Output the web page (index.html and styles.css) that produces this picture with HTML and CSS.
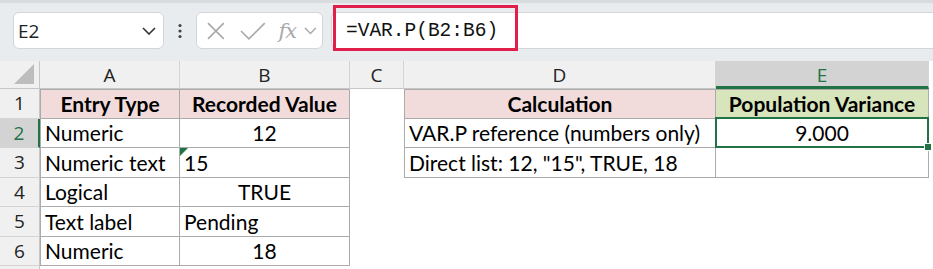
FILE: index.html
```html
<!DOCTYPE html>
<html lang="en">
<head>
    <meta charset="UTF-8">
    <title>VAR.P sheet</title>
    <link rel="stylesheet" href="styles.css">
</head>
<body>
    <div class="toolbar">
        <div class="namebox">
            <span class="name">E2</span>
            <svg class="chev" width="14" height="8" viewBox="0 0 14 8"><path d="M1 1 L7 7 L13 1" fill="none" stroke="#333" stroke-width="1.6"/></svg>
        </div>
        <div class="grip">
            <svg width="6" height="16" viewBox="0 0 6 16"><circle cx="3" cy="2.5" r="1.6" fill="#444"/><circle cx="3" cy="8" r="1.6" fill="#444"/><circle cx="3" cy="13.5" r="1.6" fill="#444"/></svg>
        </div>
        <div class="fxbox">
            <svg width="20" height="20" viewBox="0 0 20 20"><path d="M2 2 L18 18 M18 2 L2 18" stroke="#a9a9a9" stroke-width="1.6"/></svg>
            <svg width="26" height="20" viewBox="0 0 26 20"><path d="M1 10 L9 18 L25 2" fill="none" stroke="#a9a9a9" stroke-width="1.6"/></svg>
            <span class="fx">fx</span>
            <svg width="13" height="8" viewBox="0 0 13 8"><path d="M1 1 L6.5 6.5 L12 1" fill="none" stroke="#a9a9a9" stroke-width="1.5"/></svg>
        </div>
        <div class="formula">
            <span class="formula-text">=VAR.P(B2:B6)</span>
            <div class="highlight"></div>
        </div>
    </div>

    <div class="sheet">
        <div class="colhead corner"><span class="tri"></span></div>
        <div class="colhead">A</div>
        <div class="colhead">B</div>
        <div class="colhead">C</div>
        <div class="colhead">D</div>
        <div class="colhead sel">E</div>

        <div class="rowhead">1</div>
        <div class="cell t first left head-pink bold center">Entry Type</div>
        <div class="cell t first head-pink bold center">Recorded Value</div>
        <div class="cell"></div>
        <div class="cell t first left head-pink bold center">Calculation</div>
        <div class="cell t first head-green bold center">Population Variance</div>

        <div class="rowhead sel">2</div>
        <div class="cell t left">Numeric</div>
        <div class="cell t center">12</div>
        <div class="cell"></div>
        <div class="cell t left">VAR.P reference (numbers only)</div>
        <div class="cell t center active">9.000<span class="handle"></span></div>

        <div class="rowhead">3</div>
        <div class="cell t left">Numeric text</div>
        <div class="cell t flagged"><span class="flag"></span>15</div>
        <div class="cell"></div>
        <div class="cell t left">Direct list: 12, "15", TRUE, 18</div>
        <div class="cell t"></div>

        <div class="rowhead">4</div>
        <div class="cell t left">Logical</div>
        <div class="cell t center">TRUE</div>
        <div class="cell"></div>
        <div class="cell"></div>
        <div class="cell"></div>

        <div class="rowhead">5</div>
        <div class="cell t left">Text label</div>
        <div class="cell t">Pending</div>
        <div class="cell"></div>
        <div class="cell"></div>
        <div class="cell"></div>

        <div class="rowhead">6</div>
        <div class="cell t left">Numeric</div>
        <div class="cell t center">18</div>
        <div class="cell"></div>
        <div class="cell"></div>
        <div class="cell"></div>

        <div class="rowhead"></div>
        <div class="cell"></div>
        <div class="cell"></div>
        <div class="cell"></div>
        <div class="cell"></div>
        <div class="cell"></div>
    </div>
</body>
</html>
```

FILE: styles.css
```css
html, body {
    margin: 0;
    height: 100%;
    overflow: hidden;
    background: #ffffff;
    font-family: "Open Sans", "Noto Sans", sans-serif;
}

/* toolbar with name box and formula bar */
.toolbar {
    display: flex;
    align-items: center;
    border-top: 3px solid #d9dcdf;
    background: #e9ecef;
    box-sizing: border-box;
    height: 61px;
    padding-left: 13px;
}

.namebox {
    display: flex;
    align-items: center;
    justify-content: space-between;
    width: 151px;
    height: 37px;
    box-sizing: border-box;
    padding: 0 7px 0 4px;
    margin-top: -3px;
    background: #fff;
    border: 1px solid #d3d5d8;
    border-radius: 6px;
}

.name {
    font-size: 19px;
    color: #1f1f1f;
}

.grip {
    display: flex;
    width: 32px;
    justify-content: center;
    margin-top: -3px;
}

.fxbox {
    display: flex;
    align-items: center;
    width: 127px;
    height: 37px;
    box-sizing: border-box;
    padding: 0 5px 0 9px;
    margin-top: -3px;
    background: #fff;
    border: 1px solid #d3d5d8;
    border-radius: 6px;
}

.fxbox svg:nth-child(2) { margin-left: 14px; }

.fx {
    margin-left: 13px;
    margin-right: 8px;
    font-family: "DejaVu Serif", "Liberation Serif", serif;
    font-style: italic;
    font-size: 21px;
    color: #a9a9a9;
    letter-spacing: -1px;
}

.formula {
    position: relative;
    flex: 1;
    height: 37px;
    margin-left: 8px;
    margin-top: -3px;
    box-sizing: border-box;
    display: flex;
    align-items: center;
    padding-left: 14px;
    background: #fff;
    border-top: 1px solid #d3d5d8;
    border-bottom: 1px solid #d3d5d8;
    border-left: 1px solid #d3d5d8;
    border-radius: 6px 0 0 6px;
}

.formula-text {
    font-family: "Liberation Mono", "DejaVu Sans Mono", monospace;
    font-size: 19.5px;
    color: #111;
}

.highlight {
    position: absolute;
    left: 1px;
    top: -8px;
    width: 185px;
    height: 46px;
    box-sizing: border-box;
    border: 3px solid #e0204a;
}

/* grid */
.sheet {
    display: grid;
    grid-template-columns: 40px 140px 170px 54px 312px 213px;
    grid-template-rows: 28px repeat(7, 29.5px);
    font-family: Lato, "Open Sans", sans-serif;
    font-size: 21px;
    color: #000;
}

.colhead {
    display: flex;
    align-items: center;
    justify-content: center;
    background: #f0f0f0;
    border-right: 1px solid #d4d4d4;
    border-bottom: 1px solid #c6c6c6;
    box-sizing: border-box;
    font-family: "Open Sans", "Noto Sans", sans-serif;
    font-size: 19px;
    color: #222;
}

.colhead.sel {
    background: #d3d3d3;
    color: #217346;
    border-bottom: 3px solid #217346;
    padding-top: 2px;
}

.corner {
    position: relative;
    border-right: 1px solid #c6c6c6;
}

.tri {
    position: absolute;
    right: 5px;
    bottom: 4px;
    width: 0;
    height: 0;
    border-left: 20px solid transparent;
    border-bottom: 20px solid #bdbdbd;
}

.rowhead {
    display: flex;
    align-items: center;
    justify-content: center;
    background: #f0f0f0;
    border-right: 1px solid #c6c6c6;
    border-bottom: 1px solid #d4d4d4;
    box-sizing: border-box;
    font-family: "Open Sans", "Noto Sans", sans-serif;
    font-size: 19px;
    color: #222;
}

.rowhead.sel {
    background: #d3d3d3;
    color: #217346;
    border-right: 2px solid #217346;
}

.cell {
    position: relative;
    display: flex;
    align-items: center;
    padding: 0 4px;
    box-sizing: border-box;
    white-space: nowrap;
}

.cell.t {
    border-right: 1px solid #ababab;
    border-bottom: 1px solid #ababab;
}

.cell.t.left {
    border-left: 1px solid #ababab;
}

.cell.t.first {
    border-top: 1px solid #ababab;
}

.center { justify-content: center; }
.bold { font-weight: 700; }
.head-pink { background: #f2dcdb; }
.head-green { background: #d8e4bc; }

.active::after {
    content: "";
    position: absolute;
    left: -1px;
    top: -2px;
    right: -1px;
    bottom: -1px;
    border: 2px solid #217346;
}

.handle {
    position: absolute;
    right: -4px;
    bottom: -4px;
    width: 6px;
    height: 6px;
    background: #217346;
    border: 1px solid #fff;
    z-index: 2;
}

.flag {
    position: absolute;
    left: 0;
    top: 0;
    width: 0;
    height: 0;
    border-top: 8px solid #217346;
    border-right: 8px solid transparent;
}
```
